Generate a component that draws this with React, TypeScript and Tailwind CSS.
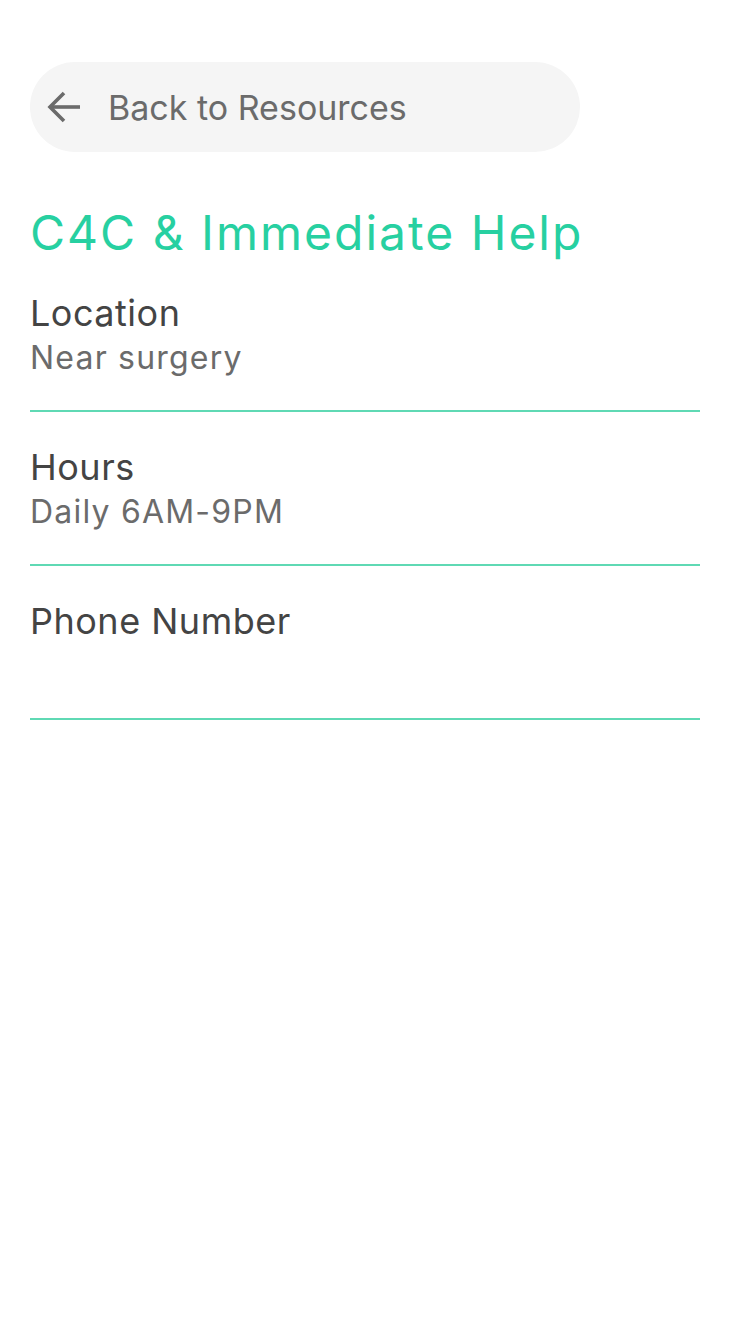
import React from "react";

function Section({ label, value }: { label: string; value?: string }) {
  return (
    <div className="border-b-2 border-[#5fd9b4] pt-[33px] h-[154px]">
      <div className="text-[36px] leading-[44px] tracking-[0.5px] text-[#444444]">{label}</div>
      {value ? (
        <div className="mt-[4px] text-[32px] leading-[38px] tracking-[1.2px] text-[#6b6b6b]">{value}</div>
      ) : null}
    </div>
  );
}

export default function App() {
  return (
    <div
      className="min-h-[1324px] w-[734px] bg-white px-[30px] pt-[62px]"
      style={{ fontFamily: "Inter, 'Noto Sans', sans-serif" }}
    >
      <div className="w-[550px] h-[90px] rounded-full bg-[#f5f5f5] flex items-center pl-[17px]">
        <svg width="34" height="34" viewBox="0 0 34 34" fill="none" stroke="#6b6b6b" strokeWidth="3.6" strokeLinecap="butt" strokeLinejoin="miter">
          <path d="M33 17H3" />
          <path d="M17 3L3 17l14 14" />
        </svg>
        <span className="ml-[27px] text-[34px] text-[#6b6b6b]">Back to Resources</span>
      </div>
      <h1 className="mt-[56px] text-[48px] leading-[50px] tracking-[2px] text-[#27d0a1] font-normal whitespace-nowrap">
        C4C &amp; Immediate Help
      </h1>
      <div className="w-[670px]">
        <Section label="Location" value="Near surgery" />
        <Section label="Hours" value="Daily 6AM-9PM" />
        <Section label="Phone Number" />
      </div>
    </div>
  );
}
